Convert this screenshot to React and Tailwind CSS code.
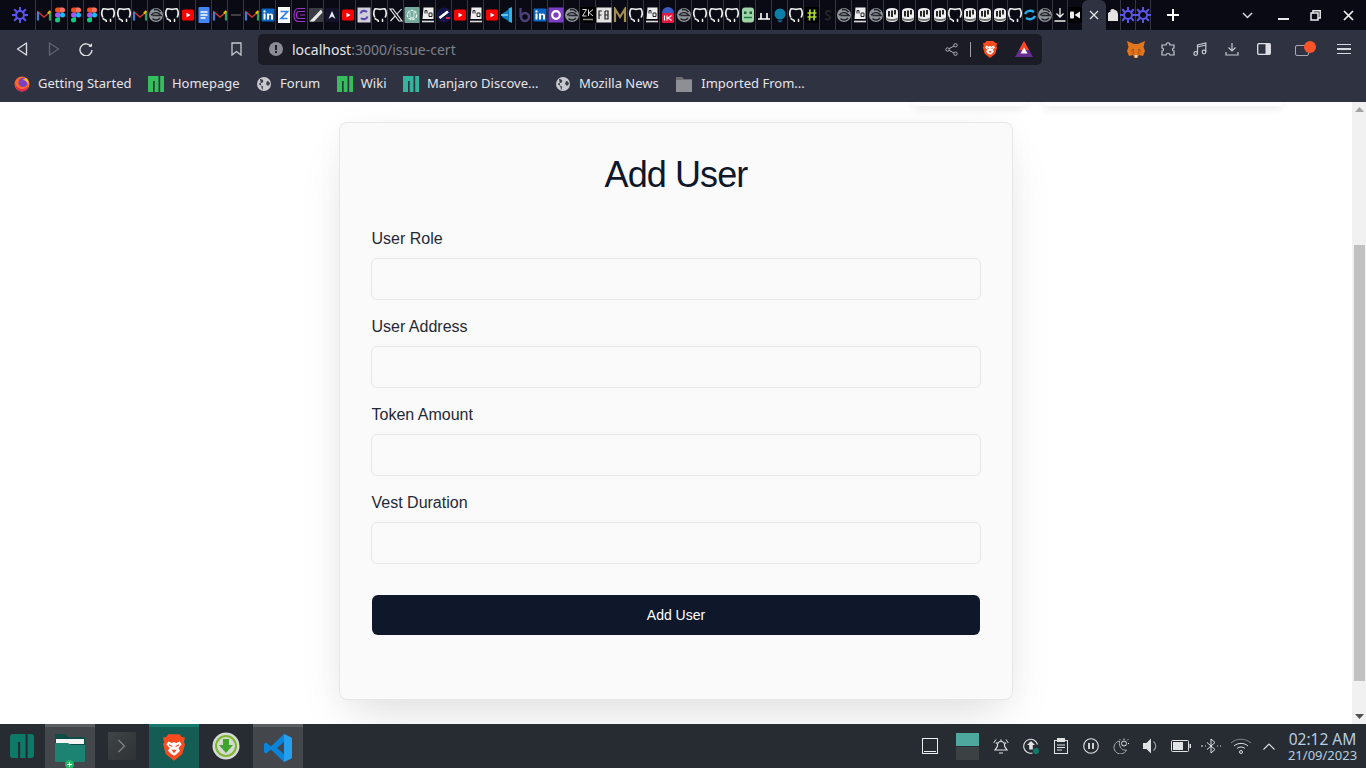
import React from "react";

const S = ({ children, size = 16, className = "", vb = "0 0 16 16" }) => (
  <svg width={size} height={size} viewBox={vb} fill="none" className={"shrink-0 " + className}>{children}</svg>
);

const Spark = () => (
  <S>
    <circle cx="8" cy="8" r="4" stroke="#5b54e8" strokeWidth="2" />
    {[0, 45, 90, 135, 180, 225, 270, 315].map((a) => (
      <path key={a} d="M8 0.500V4" stroke="#5b54e8" strokeWidth="2" strokeLinecap="round" transform={`rotate(${a} 8 8)`} />
    ))}
  </S>
);
const Gmail = () => (
  <S>
    <path d="M2 13V5l6 5 6-5v8" stroke="#c9382c" strokeWidth="1.600" />
    <path d="M2 5v8.500" stroke="#3f7fe0" strokeWidth="2.200" />
    <path d="M14 5v8.500" stroke="#2f9e5a" strokeWidth="2.200" />
    <path d="M12 6.500 14.200 4" stroke="#eeb90f" strokeWidth="2" />
  </S>
);
const Figma = () => (
  <S>
    <path d="M3 3A2.500 2.500 0 0 1 5.500.5H8v5H5.500A2.500 2.500 0 0 1 3 3Z" fill="#f24e1e" />
    <path d="M8 .5h2.500a2.500 2.500 0 0 1 0 5H8Z" fill="#ff7262" />
    <path d="M3 8a2.500 2.500 0 0 1 2.500-2.500H8v5H5.500A2.500 2.500 0 0 1 3 8Z" fill="#a259ff" />
    <circle cx="10.500" cy="8" r="2.500" fill="#1abcfe" />
    <path d="M3 13a2.500 2.500 0 0 1 2.500-2.500H8V13a2.500 2.500 0 0 1-5 0Z" fill="#0acf83" />
  </S>
);
const Github = () => (
  <S>
    <path d="M2.800 10.500C1.500 7.500 1.500 3.800 3.200 1.800 5 1.500 6 2.300 8 2.300s3-.8 4.800-.5c1.700 2 1.700 5.700.4 8.700" stroke="#f0f0f0" strokeWidth="1.700" />
    <path d="M2.500 11.500c1.500.3 2 1.500 3.800 1.800M6.300 13v2M10.500 11.700v3.300" stroke="#f0f0f0" strokeWidth="1.500" />
  </S>
);
const E = () => (
  <S>
    <circle cx="8" cy="8" r="7" fill="#8f9499" />
    <path d="M3 8.300c2.500-3 6-3.300 8.500-1.300L13 8.500H4.500" stroke="#22242a" strokeWidth="1.500" />
    <path d="M4.500 11.500c2.500 2.300 5.500 1.800 7.500-.5M6 2.800c2.500-.7 5 .2 6.500 2.200" stroke="#22242a" strokeWidth="1.500" />
  </S>
);
const YT = () => (
  <S>
    <rect x="2" y="2.500" width="12" height="11" rx="1.500" fill="#f00" />
    <path d="M6.500 5.800v4.600L10.500 8.100Z" fill="#fff" />
  </S>
);
const Docs = () => (
  <S>
    <rect x="2.500" y="0" width="11" height="16" rx="1" fill="#4285f4" />
    <path d="M4.500 5h7M4.500 8h7M4.500 11h5" stroke="#fff" strokeWidth="1.500" />
  </S>
);
const Dash = () => <S><path d="M3 8h10" stroke="#555" strokeWidth="1.500" /></S>;
const In = () => (
  <S>
    <rect x="1.500" y="1.500" width="13" height="13" rx="1" fill="#0a66c2" />
    <rect x="3.500" y="6.500" width="2" height="6" fill="#fff" />
    <rect x="3.500" y="3.500" width="2" height="2" fill="#fff" />
    <path d="M7 12.500v-6h2v1c1-1.500 4-1.200 4 1.200v3.800h-2V9c0-1.200-2-1.200-2 0v3.500Z" fill="#fff" />
  </S>
);
const Zed = () => (
  <S>
    <rect x="2" y="0" width="12" height="16" fill="#fff" />
    <path d="M4.500 4.500h7L5 11.500h6.500" stroke="#2f80ed" strokeWidth="1.700" />
  </S>
);
const Cc = () => (
  <S>
    <path d="M13 1.500H6.500C3.500 1.500 2 4.500 2 8s1.500 6.500 4.500 6.500H13M13 4.500H7c-1.800 0-2.500 1.700-2.500 3.500s.7 3.500 2.500 3.500h6M8 8h5" stroke="#a42fd0" strokeWidth="1.200" />
  </S>
);
const Pen = () => (
  <S>
    <rect x="1" y="1" width="14" height="14" rx="1" fill="#3a3d42" />
    <path d="M1.500 14.500 13 2.500l1.500 3-8.500 9Z" fill="#e8e8e8" />
  </S>
);
const AA = () => (
  <S>
    <rect x="1" y="1" width="14" height="14" rx="2" fill="#12122a" />
    <path d="M4.500 12 8 4l3.500 8L8 9.500Z" fill="#e8e8f0" />
  </S>
);
const Sync = () => (
  <S>
    <rect x="1.500" y="0.500" width="13" height="15" fill="#d0d0dc" />
    <path d="M4.500 6.500c1-3 4.500-3.500 6.500-1.500M11.500 9.500c-1 3-4.500 3.500-6.500 1.500" stroke="#5b4bb0" strokeWidth="2.200" />
  </S>
);
const XX = () => (
  <S>
    <path d="M2 2h3l9 12h-3Z" stroke="#eee" strokeWidth="1.100" />
    <path d="M13.500 2 9 7M7 9.200 2.500 14" stroke="#eee" strokeWidth="1.100" />
  </S>
);
const Gpt = () => (
  <S>
    <rect x="0.500" y="0" width="15" height="16" rx="1" fill="#74aa9c" />
    <circle cx="8" cy="8" r="4.700" stroke="#e8f4f0" strokeWidth="1.200" strokeDasharray="3 1" />
    <path d="M6 5v5l4 2M10 4v6L6 12" stroke="#e8f4f0" strokeWidth="0.800" />
  </S>
);
const MD = () => (
  <S>
    <path d="M3.500 0.500H13.500V12H2.500Z" fill="#eee" />
    <path d="M5 3.500h2M5 3.500v3M7 3.500v3M9 6h3M9 6v3.500h3V6" stroke="#222" strokeWidth="1" />
    <path d="M2 14.500H14" stroke="#ddd" strokeWidth="1.600" />
  </S>
);
const Slash = () => (
  <S>
    <circle cx="8" cy="8" r="7.500" fill="#14144a" />
    <path d="M3.500 11 12 4.500" stroke="#fff" strokeWidth="2.800" />
    <path d="M10 11h4" stroke="#e02b3c" strokeWidth="2" />
  </S>
);
const Vs = () => (
  <S>
    <path d="M12 0v16l-3.500-1.500V1.500Z" fill="#22b8f0" />
    <path d="M8.500 2.500 2 7v3l6.500 4Z" fill="#0e7fc8" />
    <path d="M1 8h7" stroke="#7fdcf5" strokeWidth="1.500" />
  </S>
);
const Bb = () => (
  <S>
    <circle cx="9" cy="10" r="4" stroke="#4d3f78" strokeWidth="2.400" />
    <path d="M4.500 1v9" stroke="#4d3f78" strokeWidth="2.200" />
  </S>
);
const Gear = () => (
  <S>
    <rect x="0.500" y="0.500" width="15" height="15" fill="#7b3fc4" />
    <circle cx="8" cy="8" r="3.800" stroke="#fff" strokeWidth="2.200" />
  </S>
);
const ZK = () => (
  <S>
    <rect width="16" height="16" fill="#000" />
    <path d="M2.500 2.500h4L2.500 9h4M8.500 2.500V9M13 2.500 9 5.700 13 9" stroke="#ddd" strokeWidth="1" />
    <path d="M3 12.500h10" stroke="#888" strokeWidth="1.500" />
  </S>
);
const FB = () => (
  <S>
    <rect x="0.500" y="0.500" width="15" height="15" fill="#e4e4e4" />
    <path d="M3 12V4h3M3 8h2.500M9 4v8h3V8H9M9 4h3v4" stroke="#222" strokeWidth="1.200" />
  </S>
);
const Mm = () => <S><path d="M3 15V2l5 8 5-8v13" stroke="#a68d52" strokeWidth="2.200" /></S>;
const OneK = () => (
  <S>
    <path d="M2 6a6 6 0 0 1 12 0Z" fill="#3b5cc4" />
    <rect x="2" y="6" width="12" height="10" rx="1" fill="#e5173f" />
    <path d="M4.500 8.500v5M7 8.500v5M11.500 8.500l-3.500 2.500 3.500 2.500" stroke="#fff" strokeWidth="1.100" />
  </S>
);
const Robot = () => (
  <S>
    <rect x="2" y="0.500" width="12" height="15" rx="3" fill="#9fd4a8" />
    <rect x="4" y="4.500" width="2.500" height="2.500" fill="#1f5a34" />
    <rect x="9.500" y="4.500" width="2.500" height="2.500" fill="#1f5a34" />
    <path d="M4 10.500h8" stroke="#1f7a44" strokeWidth="1.500" />
  </S>
);
const UU = () => <S><path d="M2 12h12M5 6v6M11 6v6" stroke="#fff" strokeWidth="1.600" /></S>;
const Blue = () => (
  <S>
    <circle cx="8" cy="7" r="5.500" fill="#0c7fa8" />
    <path d="M5 13.500h6L8 15.500Z" fill="#0c7fa8" />
  </S>
);
const Hash = () => (
  <S>
    <rect x="1" y="0" width="14" height="16" fill="#000" />
    <path d="M6 2.500 5.500 13.500M10.500 2.500 10 13.500M3.500 6h9M3.500 10h9" stroke="#a8dc30" strokeWidth="1.700" />
  </S>
);
const Ss = () => <S><path d="M11 5C9 3 5 4 6 6.500s4 1.500 4 4-3 2.500-5 1" stroke="#222428" strokeWidth="2" /></S>;
const Drip = () => (
  <S>
    <path d="M2 4.500C2 2.500 4 1 8 1s6 1.500 6 3.500v7c0 2-2.500 3.500-6 3.500s-6-1.500-6-3.500Z" fill="#eee" />
    <path d="M5 4v5.500M8 3.500v6.500M11 3v4.500" stroke="#111" strokeWidth="1.800" />
    <path d="M2.200 10.500c3 2 8.600 2 11.600 0v1.700c-3 2.300-8.600 2.300-11.600 0Z" fill="#707070" />
  </S>
);
const BlueC = () => (
  <S>
    <path d="M3 7c1.500-3.500 6-4 9-2" stroke="#22b0e8" strokeWidth="2.400" />
    <path d="M13 9c-1.500 3.500-6 4-9 2" stroke="#22b0e8" strokeWidth="2.400" />
  </S>
);
const Dl = () => (
  <S>
    <path d="M8 1V10M4.500 6.500 8 10l3.500-3.500" stroke="#eee" strokeWidth="1.300" />
    <path d="M2.500 14h11" stroke="#eee" strokeWidth="1.500" />
  </S>
);
const Play = () => (
  <S>
    <rect x="1" y="0" width="14" height="16" fill="#000" />
    <rect x="3" y="4.500" width="4" height="7" rx="1" fill="#eee" />
    <path d="M7.500 8l5.500-3.500v7Z" fill="#eee" />
  </S>
);
const Ghost = () => <S><path d="M3 14V6l2.500-1.500V3c1-1.500 3-1.500 4.500 0l2 1 1 3v7Z" fill="#e4e4e4" /></S>;

const tabs = [
  Gmail, Figma, Figma, Figma, Github, Github, Gmail, E, Github, YT, Docs, Gmail, Dash, Gmail, In, Zed, Cc, Pen, AA, YT,
  Sync, Github, XX, Gpt, MD, Slash, YT, MD, YT, Vs, Bb, In, Gear, E, ZK, FB, Mm, Github, MD, OneK, E, Github, Github,
  Github, Robot, UU, Blue, Github, Hash, Ss, E, MD, E, Drip, Drip, Drip, Drip,
];
const tabsNarrow = [Github, Drip, Drip, Drip, Github, BlueC, E, Dl];

const Slot = ({ Icon, narrow }) => (
  <div className={(narrow ? "w-[15px]" : "w-[16px]") + " h-[30px] flex items-center justify-center border-r border-[#34353f]"}>
    <Icon />
  </div>
);

const TabStrip = () => (
  <div className="h-[30px] bg-[#0a0a14] flex items-center shrink-0">
    <div className="w-[36px] flex justify-center pl-[4px] border-r border-[#34353f] h-[30px] items-center"><Spark /></div>
    {tabs.map((I, i) => <Slot key={i} Icon={I} />)}
    {tabsNarrow.map((I, i) => <Slot key={i} Icon={I} narrow />)}
    <div className="w-[14px] h-[30px] flex items-center justify-center"><Play /></div>
    <div className="w-[24px] h-[30px] bg-[#2f3241] rounded-t-md flex items-center justify-center">
      <svg width="10" height="10" viewBox="0 0 10 10"><path d="M1 1l8 8M9 1l-8 8" stroke="#e4e4e8" strokeWidth="1.300" /></svg>
    </div>
    <Slot Icon={Ghost} narrow />
    <Slot Icon={Spark} narrow />
    <Slot Icon={Spark} narrow />
    <div className="ml-[16px] w-[12px] flex justify-center">
      <svg width="12" height="12" viewBox="0 0 12 12"><path d="M6 0v12M0 6h12" stroke="#fff" strokeWidth="2" /></svg>
    </div>
    <div className="ml-[63px] w-[11px]">
      <svg width="11" height="7" viewBox="0 0 11 7"><path d="M1 1l4.500 4.500L10 1" stroke="#d8d8dc" strokeWidth="1.500" fill="none" /></svg>
    </div>
    <div className="ml-[25px] w-[11px] h-[9px] flex items-end"><div className="w-[11px] h-[2px] bg-[#e8e8ea]" /></div>
    <div className="ml-[21px]">
      <svg width="11" height="11" viewBox="0 0 11 11" fill="none"><path d="M3 3V.8h7.200V8H8" stroke="#e8e8ea" strokeWidth="1.500" /><rect x="1" y="3" width="7" height="7" stroke="#e8e8ea" strokeWidth="1.500" /></svg>
    </div>
    <div className="ml-[22px]">
      <svg width="11" height="11" viewBox="0 0 11 11"><path d="M1 1l9 9M10 1l-9 9" stroke="#f0f0f0" strokeWidth="1.700" /></svg>
    </div>
  </div>
);

const Lion = ({ w = 16, h = 17 }) => (
  <svg width={w} height={h} viewBox="0 0 20 24" className="shrink-0">
    <path d="M5 0h10l2 2.500 3 0.500-1 4 1 2-2.500 9L10 24 2.500 18 0 9l1-2-1-4 3-.5Z" fill="#fb4a1e" />
    <path d="M5 6.500 8 8l2-1 2 1 3-1.500L17 9l-3 3.500 1.500 2.500L12.500 18l-2.500 1.500L7.500 18l-3-3L6 12.500 3 9Z" fill="#fff" />
    <path d="M5.500 9.500 8.500 11M14.500 9.500 11.500 11M8.500 14.500h3L10 16.500Z" stroke="#fb4a1e" strokeWidth="1" fill="#fb4a1e" />
  </svg>
);

const ic = "#c8c9cf";

const Toolbar = () => (
  <div className="h-[38px] bg-[#2f3241] flex items-center shrink-0">
    <svg width="12" height="14" viewBox="0 0 12 14" fill="none" className="ml-[16px] shrink-0"><path d="M10.500 1 1.500 7l9 6Z" stroke="#d8d9de" strokeWidth="1.400" strokeLinejoin="round" /></svg>
    <svg width="12" height="14" viewBox="0 0 12 14" fill="none" className="ml-[20px] shrink-0"><path d="M1.500 1l9 6-9 6Z" stroke="#5f6270" strokeWidth="1.400" strokeLinejoin="round" /></svg>
    <svg width="14" height="14" viewBox="0 0 14 14" fill="none" className="ml-[19px] shrink-0"><path d="M12 4.500A6 6 0 1 0 13 8" stroke="#e0e0e4" strokeWidth="1.400" /><path d="M9.500 4.800H13V1Z" fill="#e0e0e4" /></svg>
    <svg width="11" height="14" viewBox="0 0 11 14" fill="none" className="ml-[138px] shrink-0"><path d="M1 1h9v12L5.500 9.500 1 13Z" stroke={ic} strokeWidth="1.300" /></svg>
    <div className="ml-[16px] w-[784px] h-[31px] bg-[#1b1c26] rounded-[5px] flex items-center pl-[11px] pr-[9px]">
      <div className="w-[14px] h-[14px] rounded-full bg-[#8b8c94] flex flex-col items-center justify-center gap-[1px]">
        <div className="w-[2px] h-[5px] bg-[#1b1c26]" />
        <div className="w-[2px] h-[2px] bg-[#1b1c26]" />
      </div>
      <div className="ml-[9px] text-[14px] font-['Noto_Sans',sans-serif] text-[#e4e5e9] whitespace-nowrap">localhost<span className="text-[#7e808a]">:3000/issue-cert</span></div>
      <div className="flex-1" />
      <svg width="13" height="13" viewBox="0 0 13 13" fill="none" className="shrink-0"><circle cx="2.500" cy="6.500" r="1.700" stroke="#b0b1b8" /><circle cx="10.500" cy="2.300" r="1.700" stroke="#b0b1b8" /><circle cx="10.500" cy="10.700" r="1.700" stroke="#b0b1b8" /><path d="M4 5.700 9 3M4 7.300 9 10" stroke="#b0b1b8" /></svg>
      <div className="ml-[12px] w-[1px] h-[15px] bg-[#a0a1a8]" />
      <div className="ml-[11px]"><Lion /></div>
      <svg width="18" height="16" viewBox="0 0 18 16" className="ml-[17px] shrink-0"><path d="M9 0l9 16H0Z" fill="#662d91" /><path d="M9 0l5 9H4Z" fill="#ff4724" /><path d="M9 6.500l3.500 6h-7Z" fill="#fff" /></svg>
    </div>
    <svg width="18" height="17" viewBox="0 0 18 17" className="ml-[85px] shrink-0"><path d="M0 0l7 3h4l7-3-1.500 6L18 10l-2 5-4-1-1.500 3h-3L6 14l-4 1-2-5L1.500 6Z" fill="#e2761b" /><path d="M4 9l3 .5.500 4.500-3-1.500ZM14 9l-3 .5-.5 4.500 3-1.500Z" fill="#cd6116" /><path d="M7.500 14h3l-.5 2.500h-2Z" fill="#e4d8cc" /><path d="M5 8l2 .5-1 1ZM13 8l-2 .5 1 1Z" fill="#233447" /></svg>
    <svg width="14" height="14" viewBox="0 0 14 14" fill="none" className="ml-[16px] shrink-0"><path d="M5 3c0-3 4-3 4 0h4v3c-2 0-2 3 0 3v4H9c0-2-4-2-4 0H1V9c2 0 2-3 0-3V3Z" stroke={ic} strokeWidth="1.200" /></svg>
    <svg width="14" height="14" viewBox="0 0 14 14" fill="none" className="ml-[18px] shrink-0"><circle cx="2.700" cy="11.500" r="1.800" stroke={ic} strokeWidth="1.200" /><circle cx="11" cy="10" r="1.800" stroke={ic} strokeWidth="1.200" /><path d="M4.500 11.500V3L12.800 1v9M4.500 5l8.300-2" stroke={ic} strokeWidth="1.200" /></svg>
    <svg width="14" height="14" viewBox="0 0 14 14" fill="none" className="ml-[18px] shrink-0"><path d="M7 1v8M3.500 5.500 7 9l3.500-3.500" stroke={ic} strokeWidth="1.200" /><path d="M1 10v3h12v-3" stroke={ic} strokeWidth="1.200" /></svg>
    <svg width="14" height="12" viewBox="0 0 14 12" fill="none" className="ml-[18px] shrink-0"><rect x="0.700" y="0.700" width="12.600" height="10.600" rx="1" stroke="#e0e0e4" strokeWidth="1.300" /><rect x="8.500" y="1" width="4.500" height="10" fill="#e0e0e4" /></svg>
    <div className="relative ml-[24px] w-[14px] h-[11px] mt-[2px] border border-[#a8a9b0] rounded-[2px] shrink-0">
      <div className="absolute -top-[5px] left-[8px] w-[12px] h-[12px] rounded-full bg-[#fb542b]" />
    </div>
    <div className="ml-[28px] w-[14px] flex flex-col gap-[3px] shrink-0">
      <div className="h-[1.500px] bg-[#d8d9de]" /><div className="h-[1.500px] bg-[#d8d9de]" /><div className="h-[1.500px] bg-[#d8d9de]" />
    </div>
  </div>
);

const FF = () => (
  <svg width="16" height="16" viewBox="0 0 16 16" className="shrink-0">
    <circle cx="8" cy="8" r="7.500" fill="#f76a2a" />
    <circle cx="9" cy="6.500" r="4.500" fill="#7a3fc4" />
    <path d="M1 7c1 6 9 9 13 3 .5 3-3 5.500-6 5.500S1 12 1 7Z" fill="#e0225c" />
    <path d="M12 2c2 1.500 3 4 2.500 7-1-3-3-5-6-5Z" fill="#ffbd2e" />
  </svg>
);
const ManjaroIcon = ({ c = "#35bf5c", size = 16 }) => (
  <svg width={size} height={size} viewBox="0 0 16 16" className="shrink-0">
    <rect width="16" height="16" fill={c} />
    <rect x="5" y="5" width="1.700" height="11" fill="#2f3241" />
    <rect x="10.500" y="0" width="1.700" height="16" fill="#2f3241" />
  </svg>
);
const Globe = () => (
  <svg width="16" height="16" viewBox="0 0 16 16" className="shrink-0">
    <circle cx="8" cy="8" r="7" fill="#c8c9ce" />
    <path d="M4 3c2 0 4 1 3 3S3 6 3 8s4 1 4 3-1 3-1 3M11 5c2 0 3 2 3 3l-2 2-2-2Z" fill="#3b3d48" />
  </svg>
);
const Folder = () => (
  <svg width="18" height="15" viewBox="0 0 18 15" className="shrink-0">
    <path d="M1 0h6l2 2h8v13H1Z" fill="#6e6f75" />
    <path d="M1 3h16v12H1Z" fill="#8e8f94" />
  </svg>
);

const marks = [
  [FF, "Getting Started"],
  [ManjaroIcon, "Homepage"],
  [Globe, "Forum"],
  [ManjaroIcon, "Wiki"],
  [() => <ManjaroIcon c="#33b49c" />, "Manjaro Discove..."],
  [Globe, "Mozilla News"],
  [Folder, "Imported From..."],
];

const Bookmarks = () => (
  <div className="h-[34px] pb-[2px] bg-[#2f3241] flex items-center gap-[16.500px] pl-[14px] shrink-0 font-['Noto_Sans',sans-serif] text-[13px] text-[#e4e5ea]">
    {marks.map(([I, t]) => (
      <div key={t} className="flex items-center gap-[8px] whitespace-nowrap"><I /><span>{t}</span></div>
    ))}
  </div>
);

const Field = ({ label }) => (
  <div className="mb-[15px]">
    <label className="block -ml-[0.500px] text-[16px] leading-[24px] text-[#1f2937] mb-[7px]">{label}</label>
    <input className="block w-[610px] -mx-[1px] h-[42px] bg-[#fafafa] border border-[#e5e7eb] rounded-md" />
  </div>
);

const Page = () => (
  <div className="flex-1 flex min-h-0 bg-white">
    <div className="flex-1 flex flex-col items-center overflow-hidden font-['Liberation_Sans',sans-serif]">
      <div className="w-full h-[4px] flex justify-end gap-[17px] pr-[69px] shrink-0">
        <div className="w-[113px] h-[4px] bg-white rounded-b-xl shadow-[0_2px_8px_rgba(0,0,0,0.14)]" />
        <div className="w-[240px] h-[4px] bg-white rounded-b-xl shadow-[0_2px_8px_rgba(0,0,0,0.14)]" />
      </div>
      <div className="mt-[16px] w-[674px] h-[578px] shrink-0 bg-[#fafafa] border border-[#e5e7eb] rounded-lg px-[32px] pt-[28px] shadow-[0_25px_50px_-12px_rgba(0,0,0,0.12),0_0_30px_rgba(0,0,0,0.03)]">
        <h1 className="text-[36px] leading-[48px] tracking-tight text-[#0f172a] text-center mb-[28px]">Add User</h1>
        <Field label="User Role" />
        <Field label="User Address" />
        <Field label="Token Amount" />
        <Field label="Vest Duration" />
        <button className="mt-[16px] w-full h-[40px] bg-[#0f172a] rounded-md text-white text-[14px]">Add User</button>
      </div>
    </div>
    <div className="w-[14px] bg-[#f1f1f1] flex flex-col items-center shrink-0">
      <svg width="9" height="5" viewBox="0 0 9 5" className="mt-[5px] shrink-0"><path d="M4.500 0 9 5H0Z" fill="#a3a3a3" /></svg>
      <div className="mt-[133px] w-[11px] h-[436px] bg-[#c1c1c1] shrink-0" />
      <div className="flex-1" />
      <svg width="9" height="5" viewBox="0 0 9 5" className="mb-[5px] shrink-0"><path d="M0 0h9L4.500 5Z" fill="#505050" /></svg>
    </div>
  </div>
);

const tray = "#e0e2e4";

const Taskbar = () => (
  <div className="h-[44px] bg-[#272c33] flex items-center shrink-0">
    <svg width="24" height="24" viewBox="0 0 24 24" className="ml-[10px] shrink-0">
      <rect width="24" height="24" rx="3" fill="#0d7a69" />
      <rect x="8" y="8" width="2.200" height="16" fill="#272c33" />
      <rect x="15.500" y="0" width="2.200" height="24" fill="#272c33" />
    </svg>
    <div className="ml-[11px] w-[50px] h-[44px] bg-[#43474c] border-t-[3px] border-[#5a5e63] flex items-center justify-center relative">
      <svg width="30" height="28" viewBox="0 0 30 28">
        <path d="M0 0h10l3 3h17v25H0Z" fill="#0d4d45" />
        <rect x="1" y="5" width="28" height="5" fill="#f4f4f4" />
        <path d="M0 9h13l3 2h14v17H0Z" fill="#1c8272" />
      </svg>
      <div className="absolute left-[20px] bottom-[-1px] w-[9px] h-[9px] rounded-full bg-[#24b565] text-white flex items-center justify-center">
        <svg width="5" height="5" viewBox="0 0 5 5"><path d="M2.500 0v5M0 2.500h5" stroke="#fff" strokeWidth="1" /></svg>
      </div>
    </div>
    <div className="w-[54px] h-[44px] flex items-center justify-center">
      <div className="w-[28px] h-[28px] bg-gradient-to-br from-[#3f4447] to-[#2e3235] flex items-center justify-center">
        <svg width="10" height="14" viewBox="0 0 10 14" fill="none"><path d="M1.500 1l6 6-6 6" stroke="#7d8285" strokeWidth="1.300" /></svg>
      </div>
    </div>
    <div className="w-[50px] h-[44px] bg-[#155d54] border-t-[3px] border-[#137a6c] flex items-center justify-center"><Lion w={22} h={27} /></div>
    <div className="w-[54px] h-[44px] flex items-center justify-center">
      <svg width="28" height="28" viewBox="0 0 28 28">
        <circle cx="14" cy="14" r="13.500" fill="#d8dad8" />
        <circle cx="14" cy="14" r="11" fill="#7cb82a" />
        <circle cx="14" cy="14" r="9" fill="#d6d8d4" />
        <path d="M11 7h6v6h4l-7 8-7-8h4Z" fill="#3ea52a" />
      </svg>
    </div>
    <div className="w-[50px] h-[44px] bg-[#43474c] border-t-[3px] border-[#5a5e63] flex items-center justify-center">
      <svg width="28" height="28" viewBox="0 0 28 28">
        <path d="M20 0l8 4v20l-8 4L7 15.500l-5 4-2-1.500v-8l2-1.500 5 4Zm0 8-7 6 7 6Z" fill="#0a84d8" />
        <path d="M20 0l8 4v20l-8 4Z" fill="#25a0ee" />
      </svg>
    </div>
    <div className="flex-1" />
    <div className="w-[16px] h-[16px] border border-[#eceef0] flex items-end shrink-0"><div className="w-full h-[1px] mb-[1px] mx-[1px] bg-[#eceef0]" /></div>
    <div className="ml-[18px] w-[23px] h-[27px] flex flex-col shrink-0">
      <div className="h-[13px] bg-[#4fa89e]" />
      <div className="h-[1px]" />
      <div className="h-[13px] bg-[#3c4144]" />
    </div>
    <svg width="16" height="17" viewBox="0 0 16 17" fill="none" className="ml-[14px] shrink-0"><path d="M8 3.500c-3 0-3.700 2-3.700 5L2 12h12l-2.300-3.500c0-3-.7-5-3.700-5ZM8 1.500v2M6 15h4" stroke={tray} strokeWidth="1.200" /><path d="M.7 5l2.300-3.500M15.300 5 13 1.500M3 6l1.200-2M13 6l-1.200-2" stroke={tray} /></svg>
    <svg width="16" height="16" viewBox="0 0 16 16" fill="none" className="ml-[14px] shrink-0"><path d="M14.500 6.500A7 7 0 1 0 9.500 15" stroke={tray} strokeWidth="1.100" /><path d="M8 3 12 7H9.800v4.500H6.200V7H4Z" fill={tray} /><circle cx="13" cy="13" r="3" fill="#0d7a69" /></svg>
    <svg width="14" height="16" viewBox="0 0 14 16" fill="none" className="ml-[15px] shrink-0"><rect x="0.500" y="2.500" width="13" height="13" stroke={tray} /><rect x="3" y="0" width="8" height="4" fill={tray} /><path d="M3 7h8M3 9.500h8M3 12h5" stroke={tray} /></svg>
    <svg width="16" height="16" viewBox="0 0 16 16" fill="none" className="ml-[15px] shrink-0"><circle cx="8" cy="8" r="7.300" stroke={tray} strokeWidth="1.100" /><path d="M6 5v6M10 5v6" stroke={tray} strokeWidth="1.800" /></svg>
    <svg width="16" height="16" viewBox="0 0 16 16" fill="none" className="ml-[14px] shrink-0"><path d="M6.500 3a6.500 6.500 0 1 0 7 9c-3.500 1-8-2-7-9Z" stroke="#a8acae" /><circle cx="11" cy="5.500" r="2.500" stroke={tray} /><path d="M11 0.500v1.500M15 5.500h1M14.200 2.300l1-1M7.800 2.300l-1-1" stroke={tray} /></svg>
    <svg width="16" height="16" viewBox="0 0 16 16" fill="none" className="ml-[14px] shrink-0"><path d="M0 5h3.500L8 .5v15L3.500 11H0Z" fill={tray} /><path d="M10.500 3.500c3 2.500 3 6.500 0 9" stroke="#9a9fa3" strokeWidth="1.200" /></svg>
    <svg width="20" height="12" viewBox="0 0 20 12" fill="none" className="ml-[12px] shrink-0"><rect x="0.500" y="0.500" width="17" height="11" rx="1" stroke={tray} /><rect x="2" y="2" width="10" height="8" fill={tray} /><rect x="18.500" y="4" width="1.500" height="4" fill={tray} /></svg>
    <svg width="22" height="16" viewBox="0 0 22 16" fill="none" className="ml-[9px] shrink-0"><path d="M7 4.500l8 7-4 3.500V1l4 3.500-8 7" stroke={tray} /><path d="M1 8h2M5 8h1M17 8h1M20 8h1" stroke={tray} strokeWidth="1.200" /></svg>
    <svg width="22" height="16" viewBox="0 0 22 16" fill="none" className="ml-[8px] shrink-0"><path d="M1 5c5.500-5 14.500-5 20 0" stroke="#80858a" /><path d="M4 8c4-3.500 10-3.500 14 0" stroke={tray} /><path d="M7 10.500c2.500-2 5.500-2 8 0" stroke={tray} /><circle cx="11" cy="14" r="1.500" stroke={tray} /></svg>
    <svg width="12" height="7" viewBox="0 0 12 7" fill="none" className="ml-[11px] shrink-0"><path d="M0.500 6.500 6 1l5.500 5.500" stroke={tray} strokeWidth="1.100" /></svg>
    <div className="ml-[13px] mr-[9px] w-[69px] flex flex-col items-center font-['Noto_Sans',sans-serif] text-[#b5cde0] shrink-0">
      <div className="text-[15.500px] leading-[18px] whitespace-nowrap">02:12 AM</div>
      <div className="text-[13px] leading-[14px] whitespace-nowrap">21/09/2023</div>
    </div>
  </div>
);

export default function App() {
  return (
    <div className="w-[1366px] h-[768px] flex flex-col overflow-hidden">
      <TabStrip />
      <Toolbar />
      <Bookmarks />
      <Page />
      <Taskbar />
    </div>
  );
}
